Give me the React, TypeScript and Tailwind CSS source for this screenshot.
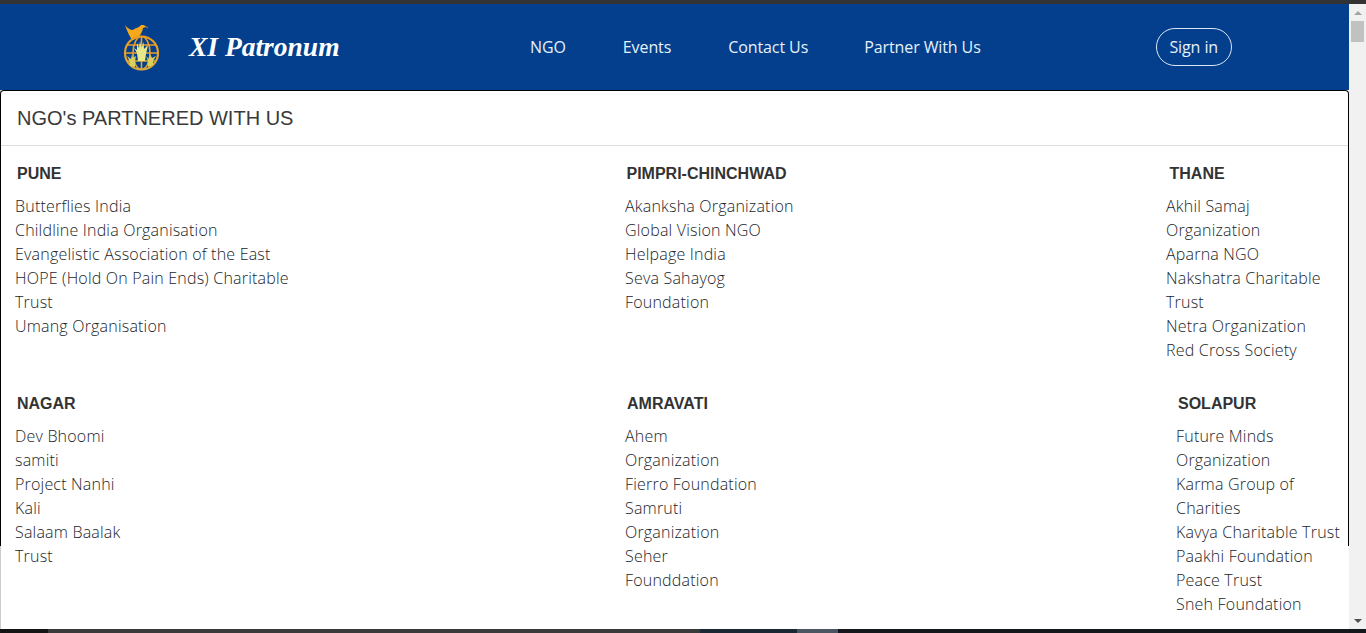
import React from 'react';

const bodyFont = "font-['Open_Sans','Noto_Sans',sans-serif]";
const headFont = "font-['Liberation_Sans',Arial,sans-serif]";

type City = { name: string; lines: string[]; width: string; headPad: string };

const rowOne: City[] = [
  {
    name: 'PUNE',
    width: 'w-[610px]',
    headPad: 'pl-[2px]',
    lines: [
      'Butterflies India',
      'Childline India Organisation',
      'Evangelistic Association of the East',
      'HOPE (Hold On Pain Ends) Charitable',
      'Trust',
      'Umang Organisation',
    ],
  },
  {
    name: 'PIMPRI-CHINCHWAD',
    width: 'w-[541px]',
    headPad: 'pl-[1.5px]',
    lines: ['Akanksha Organization', 'Global Vision NGO', 'Helpage India', 'Seva Sahayog', 'Foundation'],
  },
  {
    name: 'THANE',
    width: 'w-[170px]',
    headPad: 'pl-[3.5px]',
    lines: ['Akhil Samaj', 'Organization', 'Aparna NGO', 'Nakshatra Charitable', 'Trust', 'Netra Organization', 'Red Cross Society'],
  },
];

const rowTwo: City[] = [
  {
    name: 'NAGAR',
    width: 'w-[610px]',
    headPad: 'pl-[2px]',
    lines: ['Dev Bhoomi', 'samiti', 'Project Nanhi', 'Kali', 'Salaam Baalak', 'Trust'],
  },
  {
    name: 'AMRAVATI',
    width: 'w-[551px]',
    headPad: 'pl-[2px]',
    lines: ['Ahem', 'Organization', 'Fierro Foundation', 'Samruti', 'Organization', 'Seher', 'Founddation'],
  },
  {
    name: 'SOLAPUR',
    width: 'w-[165px]',
    headPad: 'pl-[2px]',
    lines: [
      'Future Minds',
      'Organization',
      'Karma Group of',
      'Charities',
      'Kavya Charitable Trust',
      'Paakhi Foundation',
      'Peace Trust',
      'Sneh Foundation',
    ],
  },
];

function Logo() {
  return (
    <svg width="40" height="48" viewBox="0 0 40 48" className="shrink-0">
      <defs>
        <linearGradient id="gold" x1="0" y1="0" x2="0" y2="1">
          <stop offset="0" stopColor="#ef9a1e" />
          <stop offset="1" stopColor="#d8a83c" />
        </linearGradient>
      </defs>
      {/* dove */}
      <path d="M2 2 C5 6 8 7 10 7 C12 5 16 5 18 2 L21 2 L23 4 L20 5 C19 11 15 16 9 17 C6 12 4 8 2 2 Z" fill="#f6a81c" />
      <path d="M22 3 L25 5" stroke="#b98a2a" strokeWidth="1" fill="none" />
      {/* globe */}
      <g fill="none" stroke="url(#gold)" strokeWidth="1.6">
        <circle cx="18.5" cy="30" r="16.5" strokeWidth="2.2" />
        <ellipse cx="18.5" cy="30" rx="8.5" ry="16.5" />
        <path d="M18.5 13.5 V46.5 M2 30 H35 M4.5 22 H32.5 M4.5 38 H32.5" />
      </g>
      {/* hands */}
      <path d="M15 38 L14 30 L11 25 L14 27 L14 20 L16 25 L17 18 L18.5 25 L20.5 19 L21 26 L25 22 L23 31 L22 38 Z" fill="#e6e88a" />
      <path d="M7 43 L6 37 L4 33 L8 36 L9 31 L10 35 L13 33 L12 38 L12 44 Z" fill="#d9cf5c" />
      <path d="M25 44 L25 38 L23 33 L26 36 L27 31 L29 35 L33 33 L30 38 L30 42 Z" fill="#d9cf5c" />
    </svg>
  );
}

function CityColumn({ city }: { city: City }) {
  return (
    <div className={`${city.width} shrink-0`}>
      <h3 className={`${headFont} ${city.headPad} text-[16px] leading-[20px] font-bold text-[#333]`}>{city.name}</h3>
      <ul className={`${bodyFont} mt-[10px] text-[16px] leading-[24px] font-light tracking-[0.2px] text-[#212529]`}>
        {city.lines.map((line, i) => (
          <li key={i} className="whitespace-nowrap">
            {line}
          </li>
        ))}
      </ul>
    </div>
  );
}

function Scrollbar() {
  return (
    <div className="flex w-[17px] shrink-0 flex-col items-center bg-[#f1f1f1]">
      <div className="flex h-[17px] w-full items-center justify-center">
        <div className="h-0 w-0 border-x-[4px] border-b-[4px] border-x-transparent border-b-[#a3a3a3]" />
      </div>
      <div className="h-[21px] w-[13px] bg-[#c1c1c1]" />
      <div className="flex-1" />
      <div className="flex h-[17px] w-full items-center justify-center">
        <div className="h-0 w-0 border-x-[4px] border-t-[4px] border-x-transparent border-t-[#505050]" />
      </div>
    </div>
  );
}

export default function App() {
  return (
    <div className="flex h-[633px] w-[1366px] flex-col overflow-hidden bg-white">
      <div className="h-[4px] shrink-0 bg-[#333333]" />

      <div className="flex h-[625px] shrink-0">
        <div className="flex w-[1349px] shrink-0 flex-col border-l border-l-[#cccccc]">
          {/* top nav */}
          <header className="-ml-px flex h-[86px] w-[1349px] shrink-0 items-center bg-[#033f8c] text-white">
            <div className="ml-[123px] w-[40px]">
              <Logo />
            </div>
            <a className="ml-[26px] w-[190px] font-['Liberation_Serif',serif] text-[27.5px] leading-none font-bold whitespace-nowrap italic">
              XI Patronum
            </a>
            <nav className={`${bodyFont} ml-[151px] flex gap-[57px] text-[16px] tracking-[-0.1px] text-[#e6f1fb]`}>
              <a>NGO</a>
              <a>Events</a>
              <a>Contact Us</a>
              <a className="-ml-px">Partner With Us</a>
            </nav>
            <a
              className={`${bodyFont} ml-[175px] flex h-[38px] w-[76px] items-center justify-center rounded-full border border-[#dbe6f3] text-[16px] tracking-[-0.1px] text-[#e6f1fb]`}
            >
              Sign in
            </a>
          </header>

          {/* the card is shorter than what it holds, the last rows run out below its side borders */}
          <section className="-ml-px h-[456px] w-[1349px] shrink-0 rounded-t-[4px] border-x border-t border-black bg-white">
            <div className="flex h-[55px] items-center border-b border-b-[#dedede] pl-[16px]">
              <h2 className={`${headFont} text-[20px] leading-[24px] font-normal text-[#3a3a3a]`}>NGO's PARTNERED WITH US</h2>
            </div>
            <div className="flex pt-[18px] pl-[14px]">
              {rowOne.map((city) => (
                <CityColumn key={city.name} city={city} />
              ))}
            </div>
            <div className="mt-[32px] flex pl-[14px]">
              {rowTwo.map((city) => (
                <CityColumn key={city.name} city={city} />
              ))}
            </div>
          </section>
        </div>
        <Scrollbar />
      </div>

      {/* sliver of the page behind */}
      <div className="flex h-[4px] shrink-0">
        <div className="w-[48px] bg-[#141414]" />
        <div className="w-[652px] bg-[#3a3a3a]" />
        <div className="w-[97px] bg-[#1b2833]" />
        <div className="w-[41px] bg-[#4c5661]" />
        <div className="flex-1 bg-[#14181d]" />
      </div>
    </div>
  );
}
